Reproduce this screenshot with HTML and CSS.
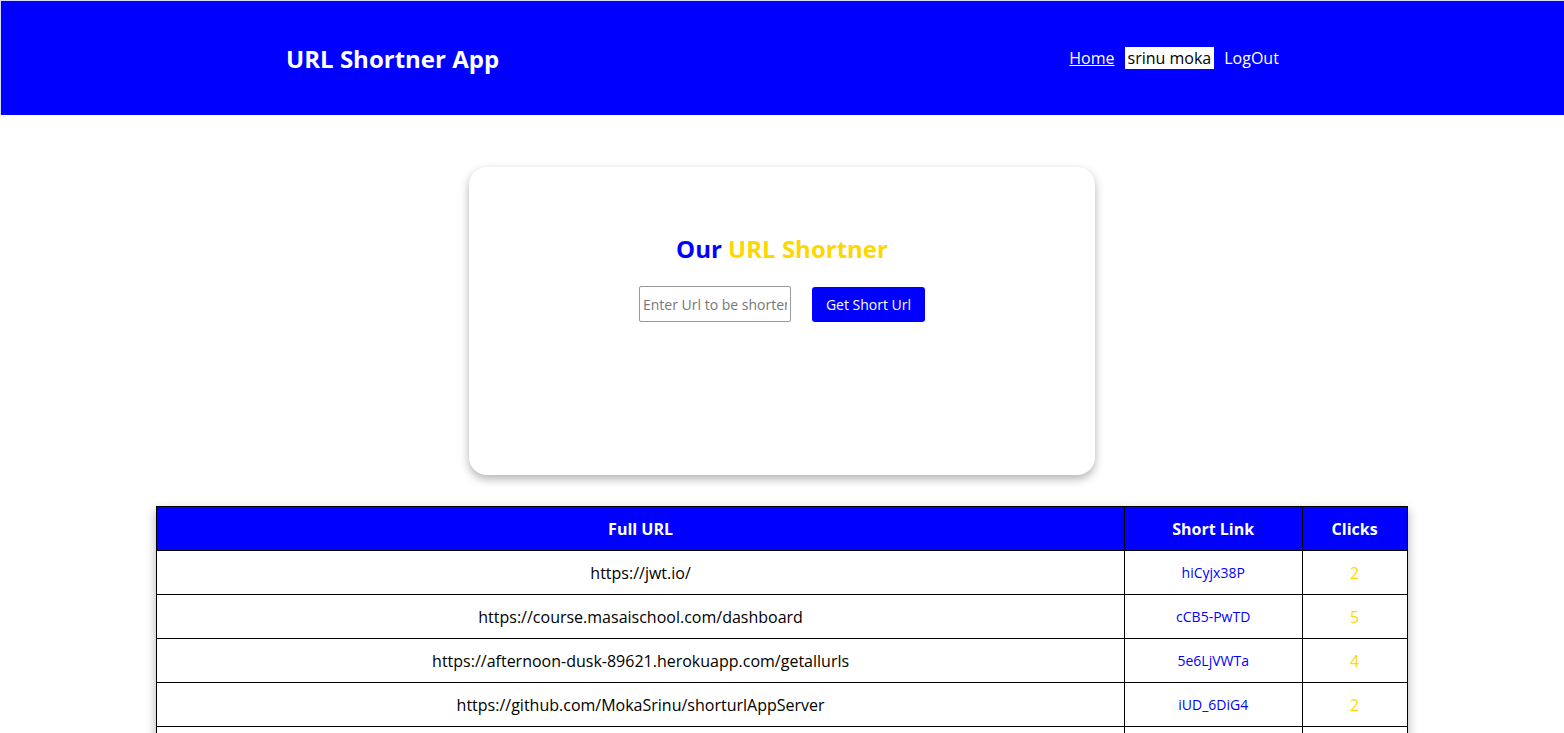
FILE: index.html
```html
<!DOCTYPE html>
<html>
<head>
<meta charset="utf-8">
<title>URL Shortner App</title>
<link rel="stylesheet" href="styles.css">
</head>
<body>
<header class="topbar">
  <h1 class="brand">URL Shortner App</h1>
  <nav class="nav">
    <a class="nav-link" href="#">Home</a>
    <span class="user">srinu moka</span>
    <span class="logout">LogOut</span>
  </nav>
</header>
<main class="main">
  <section class="card">
    <h2 class="card-title"><span class="blue">Our</span> <span class="gold">URL Shortner</span></h2>
    <form class="form">
      <input class="url-input" type="text" placeholder="Enter Url to be shortened">
      <button class="btn" type="button">Get Short Url</button>
    </form>
  </section>
  <table class="urls">
    <thead>
      <tr><th class="col-full">Full URL</th><th class="col-short">Short Link</th><th class="col-clicks">Clicks</th></tr>
    </thead>
    <tbody>
      <tr><td>https://jwt.io/</td><td class="short">hiCyjx38P</td><td class="clicks">2</td></tr>
      <tr><td>https://course.masaischool.com/dashboard</td><td class="short">cCB5-PwTD</td><td class="clicks">5</td></tr>
      <tr><td>https://afternoon-dusk-89621.herokuapp.com/getallurls</td><td class="short">5e6LjVWTa</td><td class="clicks">4</td></tr>
      <tr><td>https://github.com/MokaSrinu/shorturlAppServer</td><td class="short">iUD_6DiG4</td><td class="clicks">2</td></tr>
      <tr><td>https://github.com/MokaSrinu/shorturlAppClient</td><td class="short">q3Xb7LmN1</td><td class="clicks">1</td></tr>
    </tbody>
  </table>
</main>
</body>
</html>
```

FILE: styles.css
```css
* { box-sizing: border-box; }
body {
  margin: 0;
  font-family: "Open Sans", "Noto Sans", sans-serif;
  background: #fff;
  color: #000;
}
.topbar {
  height: 115px;
  background: #0000ff;
  border-top: 1px solid #d8d8f4;
  border-left: 1px solid #d8d8f4;
  display: flex;
  align-items: center;
  justify-content: space-around;
}
.brand {
  margin: 0;
  color: #fff;
  font-size: 24px;
  font-weight: 700;
}
.nav {
  display: flex;
  align-items: center;
  gap: 10px;
  font-size: 16px;
}
.nav-link { color: #fff; }
.user { background: #fff; color: #000; padding: 0 3px; }
.logout { color: #fff; }
.main {
  padding-top: 52px;
  display: flex;
  flex-direction: column;
  align-items: center;
}
.card {
  width: 40%;
  height: 308px;
  background: #fff;
  border-radius: 18px;
  box-shadow: 0 4px 10px rgba(0,0,0,0.3);
  display: flex;
  flex-direction: column;
  align-items: center;
  padding-top: 66px;
}
.card-title {
  margin: 0;
  font-size: 24px;
  font-weight: 700;
  line-height: 32px;
}
.blue { color: #0000ff; }
.gold { color: #ffd700; }
.form {
  margin-top: 21px;
  display: flex;
  align-items: center;
  gap: 21px;
}
.url-input {
  width: 152px;
  height: 36px;
  border: 1px solid #999;
  border-radius: 2px;
  padding: 0 3px;
  font-family: inherit;
  font-size: 14px;
}
.url-input::placeholder { color: #777; }
.btn {
  width: 113px;
  height: 35px;
  border: 0;
  border-radius: 3px;
  background: #0000ff;
  color: #fff;
  font-family: inherit;
  font-size: 14px;
}
.urls {
  margin-top: 31px;
  width: 80%;
  border-collapse: collapse;
  box-shadow: 0 4px 10px rgba(0,0,0,0.3);
  font-size: 16px;
}
.urls th, .urls td {
  border: 1px solid #000;
  height: 44px;
  text-align: center;
  padding: 0;
}
.urls th {
  background: #0000ff;
  color: #fff;
  font-weight: 700;
}
.col-full { width: 968px; }
.col-short { width: 178px; }
.col-clicks { width: 105px; }
.short { color: #0000ff; font-size: 14px; }
.clicks { color: #ffd700; }
```
